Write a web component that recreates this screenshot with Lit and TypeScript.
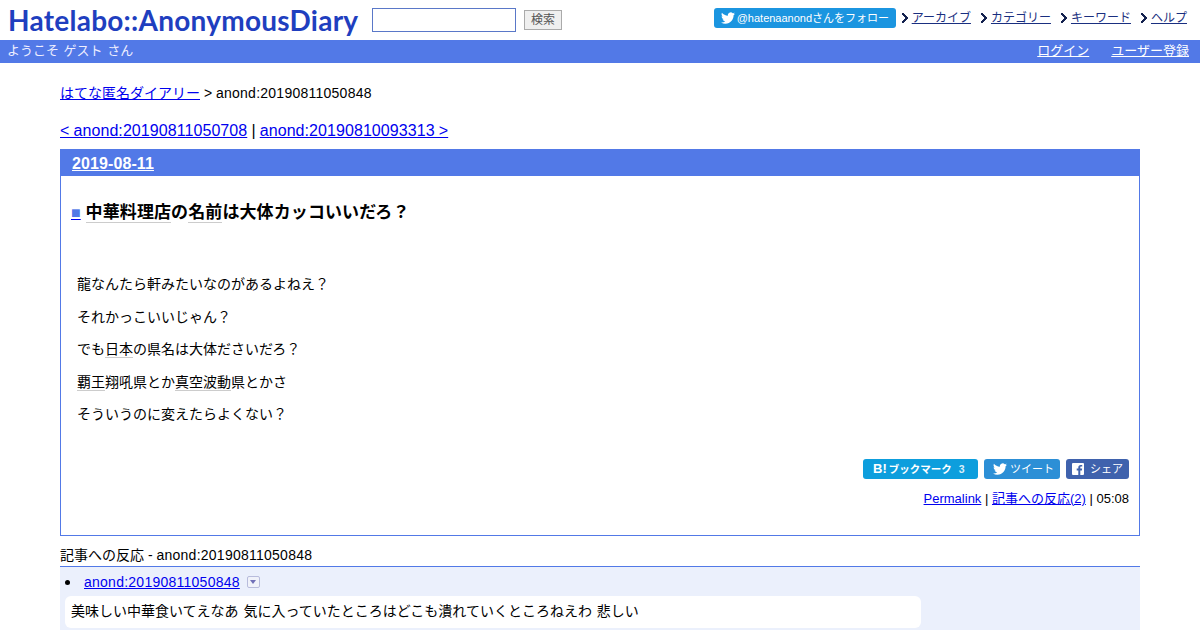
import { LitElement, html, css } from "lit";
import { customElement } from "lit/decorators.js";

const bird = html`<svg class="bird" viewBox="0 0 24 24"><path fill="currentColor" d="M23.95 4.57a10 10 0 0 1-2.82.77 4.96 4.96 0 0 0 2.16-2.72c-.95.55-2 .95-3.12 1.18a4.92 4.92 0 0 0-8.38 4.48C7.69 8.1 4.07 6.13 1.64 3.16a4.82 4.82 0 0 0-.67 2.48c0 1.71.87 3.21 2.19 4.1a4.9 4.9 0 0 1-2.23-.62v.06a4.92 4.92 0 0 0 3.95 4.83 5 5 0 0 1-2.21.08 4.94 4.94 0 0 0 4.6 3.42A9.87 9.87 0 0 1 0 19.54a14 14 0 0 0 7.56 2.21c9.05 0 14-7.5 14-13.98 0-.21 0-.42-.02-.63A9.94 9.94 0 0 0 24 4.59z"/></svg>`;
const arrow = html`<svg class="arrow" viewBox="0 0 7 10"><path fill="#14224f" d="M0 0h2v1h1v1h1v1h1v1h1v2H5v1H4v1H3v1H2v1H0V8h1V7h1V6h1V4H2V3H1V2H0z"/></svg>`;

@customElement("app-root")
export class AppRoot extends LitElement {
  static styles = css`
    :host { display: block; width: 1200px; height: 630px; overflow: hidden; background: #fff; font: 14px/20px "Liberation Sans", "Noto Sans CJK JP", sans-serif; color: #000; }
    a { color: #0000ee; }
    .top { height: 40px; display: flex; align-items: flex-start; }
    .logo { margin: 4px 0 0 8px; width: 352px; font: 700 28px/32px "Lato", sans-serif; color: #1f3fbf; white-space: nowrap; letter-spacing: 0.25px; }
    .search { margin: 8px 0 0 12px; width: 144px; height: 24px; box-sizing: border-box; border: 1px solid #5a78c8; background: #fff; }
    .btn { margin: 10px 0 0 8px; width: 38px; height: 20px; box-sizing: border-box; border: 1px solid #aaa; background: #efefef; color: #555; font-size: 12px; line-height: 18px; text-align: center; }
    .right { margin-left: auto; display: flex; align-items: flex-start; padding: 8px 13px 0 0; }
    .follow { display: flex; align-items: center; width: 182px; height: 20px; box-sizing: border-box; padding-left: 7px; gap: 2px; background: #1b95e0; border-radius: 3px; color: #fff; font-size: 11px; }
    .bird { width: 14px; height: 14px; flex: none; }
    .nav { display: flex; gap: 10px; margin-left: 6px; font-size: 12px; line-height: 20px; }
    .nav span { display: flex; align-items: center; gap: 3px; }
    .nav a { color: #1a2f80; }
    .arrow { width: 7px; height: 10px; flex: none; }
    .bar { height: 23px; background: #5279e7; color: #eef; display: flex; justify-content: space-between; padding: 0 11px 0 7px; font-size: 13px; line-height: 22px; word-spacing: 1px; }
    .bar a { color: #fff; margin-left: 22px; }
    .main { padding: 20px 60px 0; }
    .crumb { line-height: 20px; }
    .lat { letter-spacing: 0.25px; }
    .pager { margin-top: 16px; font-size: 16px; line-height: 24px; letter-spacing: 0.07px; word-spacing: -0.4px; }
    .day { margin-top: 6px; border: 1px solid #5279e7; height: 387px; box-sizing: border-box; display: flex; flex-direction: column; }
    .date { height: 26px; background: #5279e7; padding-left: 11px; font-size: 16px; font-weight: 700; line-height: 27px; letter-spacing: 0.1px; }
    .date a { color: #fff; }
    .title { margin: 25px 0 0 10px; font-size: 17px; font-weight: 700; line-height: 24px; letter-spacing: 0.1px; }
    .title a { color: #5279e7; text-decoration-color: #0000ee; font-size: 16px; }
    .kw { border-bottom: 1px solid #ccc; }
    .body { margin: 49px 0 0 16px; }
    .body p { margin: 0 0 12.5px; line-height: 20px; }
    .share { margin: 22px 10px 0 0; display: flex; justify-content: flex-end; gap: 6px; }
    .s { height: 20px; border-radius: 3px; color: #fff; display: flex; align-items: center; box-sizing: border-box; font-size: 11px; }
    .hb { width: 115px; background: #0d9edd; font-weight: 700; padding-left: 10px; gap: 7px; font-size: 10.5px; }
    .hb b { font-size: 13px; margin-right: 2px; }
    .hb .n { color: rgba(255,255,255,0.85); }
    .tw { width: 76px; background: #2c8fd6; padding-left: 9px; gap: 3px; }
    .fb { width: 63px; background: #3f62ad; padding-left: 6px; gap: 6px; }
    .fb svg { width: 12px; height: 12px; }
    .meta { margin: 10px 10px 0 0; text-align: right; font-size: 13px; }
    .ref { margin-top: 9px; border-bottom: 1px solid #5279e7; line-height: 21px; }
    .list { background: #ebf0fc; height: 70px; padding: 5px; box-sizing: border-box; }
    .item { display: flex; align-items: center; height: 20px; }
    .dot { width: 5px; height: 5px; background: #000; border-radius: 50%; margin-right: 14px; flex: none; }
    .toggle { margin-left: 7px; width: 13px; height: 12px; box-sizing: border-box; border: 1px solid #b8bcdc; background: #f0f2fa; border-radius: 2px; display: flex; align-items: center; justify-content: center; }
    .toggle i { border: 3.5px solid transparent; border-top: 4px solid #7070b8; border-bottom: 0; }
    .bubble { margin-top: 4px; width: 856px; height: 32px; background: #fff; border-radius: 6px; padding-left: 6px; box-sizing: border-box; line-height: 30px; word-spacing: 1px; }
  `;

  render() {
    return html`
      <div class="top">
        <div class="logo">Hatelabo::AnonymousDiary</div>
        <div class="search"></div>
        <div class="btn">検索</div>
        <div class="right">
          <div class="follow">${bird}<span>@hatenaanondさんをフォロー</span></div>
          <div class="nav">
            <span>${arrow}<a href="#">アーカイブ</a></span>
            <span>${arrow}<a href="#">カテゴリー</a></span>
            <span>${arrow}<a href="#">キーワード</a></span>
            <span>${arrow}<a href="#">ヘルプ</a></span>
          </div>
        </div>
      </div>
      <div class="bar"><span>ようこそ ゲスト さん</span><span><a href="#">ログイン</a><a href="#">ユーザー登録</a></span></div>
      <div class="main">
        <div class="crumb"><a href="#">はてな匿名ダイアリー</a> &gt; <span class="lat">anond:20190811050848</span></div>
        <div class="pager"><a href="#">&lt; anond:20190811050708</a> | <a href="#">anond:20190810093313 &gt;</a></div>
        <div class="day">
          <div class="date"><a href="#">2019-08-11</a></div>
          <div class="title"><a href="#">■</a> <span class="kw">中華料理店</span>の<span class="kw">名前</span>は大体カッコいいだろ？</div>
          <div class="body">
            <p>龍なんたら軒みたいなのがあるよねえ？</p>
            <p>それかっこいいじゃん？</p>
            <p>でも<span class="kw">日本</span>の県名は大体ださいだろ？</p>
            <p><span class="kw">覇王</span>翔吼県とか<span class="kw">真空波動</span>県とかさ</p>
            <p>そういうのに変えたらよくない？</p>
          </div>
          <div class="share">
            <div class="s hb"><span><b>B!</b>ブックマーク</span><span class="n">3</span></div>
            <div class="s tw">${bird}<span>ツイート</span></div>
            <div class="s fb"><svg viewBox="0 0 12 12"><path fill="#fff" d="M1 0h10a1 1 0 0 1 1 1v10a1 1 0 0 1-1 1H8.3V7.4h1.6l.2-1.8H8.3V4.4c0-.5.2-.9.9-.9h1V1.9H8.7C7.2 1.9 6.3 2.8 6.3 4.3v1.3H4.7v1.8h1.6V12H1a1 1 0 0 1-1-1V1a1 1 0 0 1 1-1z"/></svg><span>シェア</span></div>
          </div>
          <div class="meta"><a href="#">Permalink</a> | <a href="#">記事への反応(2)</a> | 05:08</div>
        </div>
        <div class="ref">記事への反応 - <span class="lat">anond:20190811050848</span></div>
        <div class="list">
          <div class="item"><i class="dot"></i><a class="lat" href="#">anond:20190811050848</a><span class="toggle"><i></i></span></div>
          <div class="bubble">美味しい中華食いてえなあ 気に入っていたところはどこも潰れていくところねえわ 悲しい</div>
        </div>
      </div>`;
  }
}
